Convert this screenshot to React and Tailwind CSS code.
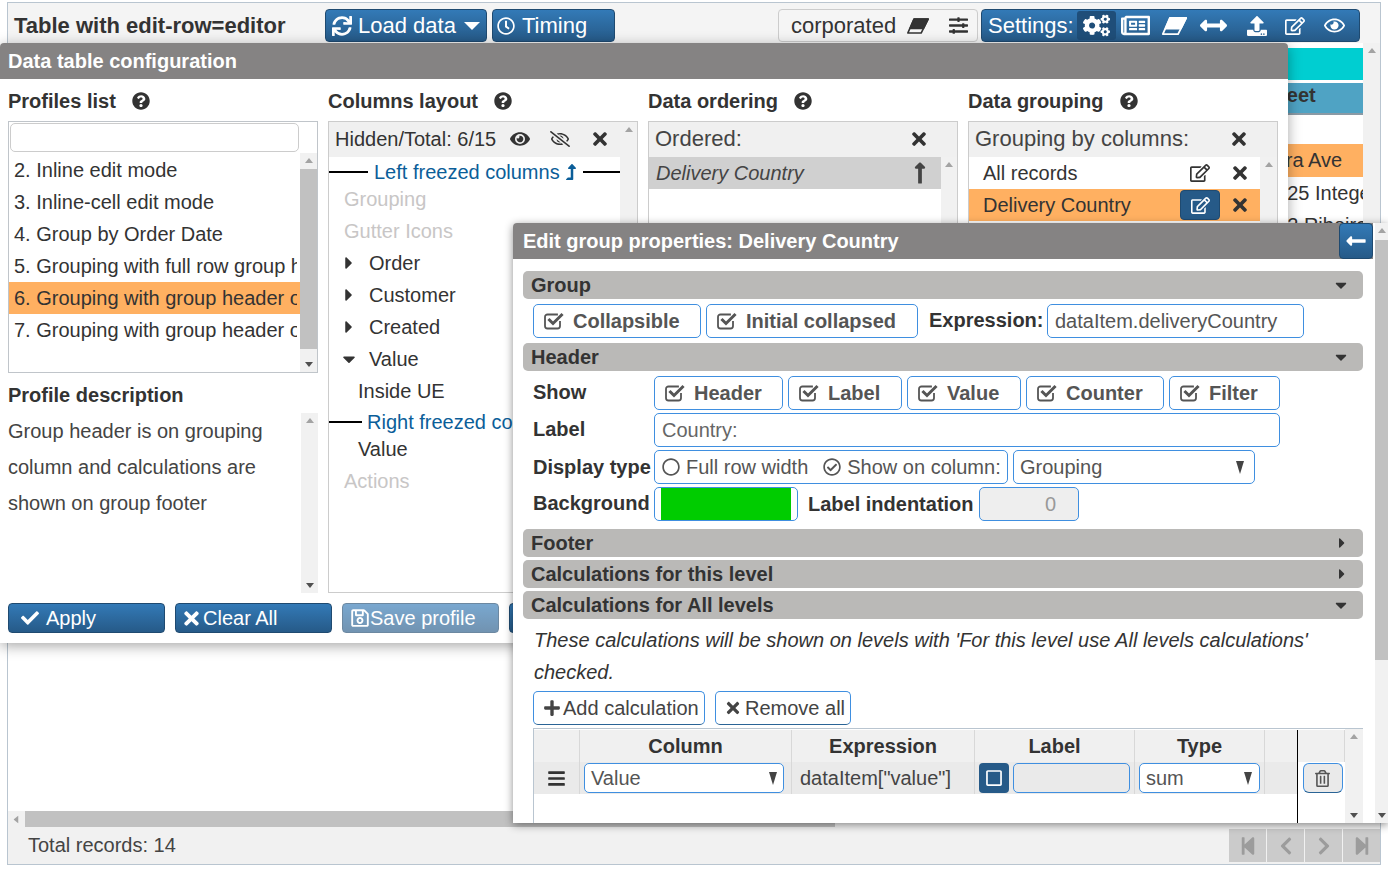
import {
  FaSync, FaCaretDown, FaCaretRight, FaRegClock, FaSlidersH, FaCogs, FaRegNewspaper,
  FaArrowsAltH, FaUpload, FaRegEdit, FaRegEye, FaEye, FaRegEyeSlash, FaTimes, FaQuestionCircle,
  FaCheck, FaRegSave, FaRegCircle, FaRegCheckCircle, FaPlus, FaBars, FaRegTrashAlt,
  FaLongArrowAltUp, FaLongArrowAltLeft, FaLevelUpAlt, FaStepBackward, FaStepForward, FaChevronLeft,
  FaChevronRight, FaRegSquare,
} from 'react-icons/fa';

const blueBtn = 'bg-linear-to-b from-[#337ab7] to-[#265a88] border border-[#1f4a70] rounded-[4px] text-white';

const Tri = ({ up, className = '' }) => (
  <svg viewBox="0 0 8 5" className={`w-2 h-[5px] ${className}`} fill="currentColor">
    <polygon points={up ? '4,0 8,5 0,5' : '0,0 8,0 4,5'} />
  </svg>
);

// the old font-awesome eraser: filled top, outlined strip along the bottom
const Eraser = ({ className = '' }) => (
  <svg viewBox="0 0 28 20" className={className} fill="currentColor" stroke="currentColor" strokeWidth="2" strokeLinejoin="round">
    <polygon points="9,1 27,1 18,19 1,19" fill="none" />
    <polygon points="9,1 27,1 21,13 4,13" />
  </svg>
);

// check-square-o, the tick sticks out of the open box
const CheckSquare = () => (
  <svg viewBox="0 0 20 18" className="w-5 h-[18px] shrink-0" fill="none" stroke="currentColor" strokeLinecap="square">
    <path d="M16 10v4a2.5 2.5 0 0 1-2.5 2.5h-10A2.5 2.5 0 0 1 1 14V5a2.5 2.5 0 0 1 2.5-2.5H13" strokeWidth="1.8" />
    <path d="M5.5 8l3.5 3.5 8.5-8.5" strokeWidth="3" />
  </svg>
);

// vertical scrollbar with arrows, thumb is optional
const VBar = ({ className = '', thumbTop = 0, thumbHeight = 0, width = 'w-4' }) => (
  <div className={`relative ${width} shrink-0 bg-[#f1f1f1] flex flex-col items-center justify-between py-[5px] text-[#a3a3a3] ${className}`}>
    <Tri up />
    {thumbHeight > 0 && (
      <div className="absolute left-0 right-0 bg-[#c1c1c1]" style={{ top: thumbTop, height: thumbHeight }} />
    )}
    <Tri className="text-[#505050]" />
  </div>
);

const Heading = ({ children }) => (
  <div className="h-[42px] flex items-center gap-4 font-bold text-[#333] pt-px">
    <span>{children}</span>
    <FaQuestionCircle className="text-[18px] text-[#333] mt-px" />
  </div>
);

const ProfileItem = ({ text, active }) => (
  <div className={`h-8 leading-8 pl-[5px] ${active ? 'bg-[#ffb061]' : ''}`}>
    <div className="w-[283px] whitespace-nowrap overflow-hidden">{text}</div>
  </div>
);

const ColumnRow = ({ text, dim, caret, indent, h = 'h-8' }) => (
  <div className={`${h} flex items-center whitespace-nowrap ${dim ? 'text-[#c8c6c6]' : ''}`}>
    {caret && (
      <span className="w-[40px] pl-[10px] shrink-0 text-[#333]">
        {caret === 'down' ? <FaCaretDown className="text-[20px]" /> : <FaCaretRight className="text-[20px]" />}
      </span>
    )}
    <span className={indent}>{text}</span>
  </div>
);

const Bar = ({ title, open }) => (
  <div className="mx-[10px] h-7 rounded-[5px] bg-[#bab9b7] flex items-center justify-between pl-2 pr-[13px] font-bold text-[#333]">
    <span>{title}</span>
    {open ? <FaCaretDown className="text-[18px]" /> : <FaCaretRight className="text-[16px]" />}
  </div>
);

const CheckBtn = ({ text, w }) => (
  <div className={`${w} h-[34px] border border-[#3f8fe0] rounded-[5px] bg-white flex items-center pl-[10px] gap-[9px] font-bold text-[#555] whitespace-nowrap`}>
    <CheckSquare />
    <span>{text}</span>
  </div>
);

const Field = ({ className = '', children }) => (
  <div className={`h-[34px] border border-[#3f8fe0] rounded-[5px] flex items-center pl-[7px] text-[#555] whitespace-nowrap ${className}`}>{children}</div>
);

const Select = ({ text, className = '', h = 'h-[34px]', pr = 'pr-[7px]' }) => (
  <div className={`${h} ${pr} border border-[#3f8fe0] rounded-[5px] bg-white flex items-center justify-between pl-[6px] text-[#555] ${className}`}>
    <span>{text}</span>
    <svg viewBox="0 0 8 13" className="w-2 h-[13px]" fill="#444"><polygon points="0,0 8,0 4,13" /></svg>
  </div>
);

const RowLabel = ({ children, className = '' }) => (
  <div className={`w-[121px] shrink-0 font-bold text-[#333] pl-[20px] whitespace-nowrap box-content ${className}`}>{children}</div>
);

const HeadCell = ({ w, children }) => (
  <div className={`${w} shrink-0 h-full border-r border-[#d8d8d8] flex items-center justify-center font-bold text-[#333]`}>{children}</div>
);

const BodyCell = ({ w, className = '', children }) => (
  <div className={`${w} shrink-0 h-full border-r border-[#d8d8d8] flex items-center ${className}`}>{children}</div>
);

const Pager = ({ children }) => (
  <div className="w-[37px] h-[33px] bg-[#cbcbcb] flex items-center justify-center text-[#9c9c9c] text-[20px]">{children}</div>
);

const Slot = ({ w, children }) => (
  <span className={`${w} shrink-0 flex items-center justify-center`}>{children}</span>
);

export default function App() {
  return (
    <div className="relative w-[1388px] h-[873px] overflow-hidden bg-white text-[20px] text-[#333] font-['Liberation_Sans',Arial,sans-serif]">
      {/* Page behind the dialogs */}
      <div className="mx-[7px] mt-[2px] h-[863px] border border-[#b9c5d0] flex flex-col">
        <div className="h-[40px] shrink-0 bg-[#f4f4f4] flex items-center pl-[6px] pr-[20px] pt-[5px]">
          <div className="w-[311px] font-bold text-[22px] whitespace-nowrap">Table with edit-row=editor</div>
          <div className={`${blueBtn} w-[162px] h-[33px] flex items-center pl-[6px] gap-[6px] text-[22px] whitespace-nowrap`}>
            <FaSync className="text-[20px]" /><span>Load data</span>
            <svg viewBox="0 0 16 8" className="w-4 h-2 ml-[2px]" fill="currentColor"><polygon points="0,0 16,0 8,8" /></svg>
          </div>
          <div className={`${blueBtn} ml-[5px] w-[123px] h-[33px] flex items-center pl-[4px] gap-[7px] text-[22px]`}>
            <FaRegClock className="text-[18px]" /><span>Timing</span>
          </div>
          <div className="ml-auto w-[200px] h-[33px] border border-[#ccc] rounded-[4px] flex items-center pl-3 text-[22px] bg-[#f5f5f5]">
            <span>corporated</span>
            <Eraser className="ml-[11px] w-[22px] h-4" />
            <FaSlidersH className="ml-[20px] text-[19px]" />
          </div>
          <div className={`${blueBtn} ml-[3px] w-[379px] h-[33px] flex items-center pl-[6px] text-[22px]`}>
            <span>Settings:</span>
            <span className="ml-[3px] w-[39px] h-[29px] shrink-0 rounded-[3px] bg-[#1f4e79] flex items-center justify-center"><FaCogs className="text-[27px]" /></span>
            <Slot w="w-10"><FaRegNewspaper className="text-[29px]" /></Slot>
            <Slot w="w-[38px]"><Eraser className="w-[27px] h-[18px]" /></Slot>
            <Slot w="w-10"><FaArrowsAltH className="text-[27px]" /></Slot>
            <Slot w="w-[46px]"><FaUpload className="text-[20px]" /></Slot>
            <Slot w="w-[30px]"><FaRegEdit className="text-[20px]" /></Slot>
            <Slot w="w-[50px]"><FaRegEye className="text-[21px]" /></Slot>
          </div>
        </div>

        {/* Table, mostly hidden by the configuration dialog */}
        <div className="flex-1 bg-white flex justify-end min-h-0">
          <div className="w-[75px] pt-[5px] text-[20px] overflow-hidden">
            <div className="h-8 bg-[#00ced1]" />
            <div className="h-8 mt-[3px] bg-[#4fa3c4] border-b-2 border-[#8a9aa5] font-bold whitespace-nowrap leading-[24px]"><span className="-ml-[29px] inline-block">Street</span></div>
            <div className="h-[29px]" />
            <div className="h-[33px] leading-[33px] bg-[#ffb061] whitespace-nowrap"><span className="-ml-[30px] inline-block">Ibara Ave</span></div>
            <div className="h-8 leading-8 whitespace-nowrap"><span className="-ml-[23px] inline-block">1225 Integer</span></div>
            <div className="h-8 leading-8 whitespace-nowrap"><span className="-ml-[23px] inline-block">132 Ribeira</span></div>
          </div>
          <VBar className="w-[17px]" width="w-[17px]" />
        </div>

        <div className="h-4 shrink-0 bg-[#f1f1f1] flex items-center relative">
          <Tri up className="-rotate-90 ml-1 text-[#a3a3a3]" />
          <div className="ml-[5px] w-[810px] h-full bg-[#c1c1c1]" />
        </div>
        <div className="h-[37px] shrink-0 bg-[#f1f1f1] flex items-center pl-[20px] pr-0">
          <span className="text-[#444] pb-[2px]">Total records: 14</span>
          <div className="ml-auto flex gap-px">
            <Pager><FaStepBackward /></Pager>
            <Pager><FaChevronLeft /></Pager>
            <Pager><FaChevronRight /></Pager>
            <Pager><FaStepForward /></Pager>
          </div>
        </div>
      </div>

      {/* Data table configuration dialog */}
      <div className="absolute left-0 top-[43px] w-[1288px] h-[600px] bg-white rounded-t-[4px] shadow-[0_3px_14px_rgba(0,0,0,0.35)] flex flex-col">
        <div className="h-9 shrink-0 bg-[#858383] rounded-t-[4px] flex items-center pl-2 font-bold text-white">Data table configuration</div>
        <div className="flex gap-[10px] px-2 flex-1 min-h-0">
          {/* Profiles */}
          <div className="w-[310px] shrink-0 flex flex-col">
            <Heading>Profiles list</Heading>
            <div className="h-[252px] border border-[#c0c5ca] flex flex-col">
              <div className="h-[31px] px-px pt-px shrink-0">
                <div className="h-[29px] w-[289px] border border-[#ccc] rounded-[5px]" />
              </div>
              <div className="flex flex-1 min-h-0">
                <div className="flex-1 min-w-0 pt-px">
                  <ProfileItem text="2. Inline edit mode" />
                  <ProfileItem text="3. Inline-cell edit mode" />
                  <ProfileItem text="4. Group by Order Date" />
                  <ProfileItem text="5. Grouping with full row group header" />
                  <ProfileItem text="6. Grouping with group header on column" active />
                  <ProfileItem text="7. Grouping with group header on column" />
                </div>
                <VBar width="w-[17px]" thumbTop={16} thumbHeight={180} />
              </div>
            </div>
            <div className="h-[40px] flex items-center font-bold pt-[4px] shrink-0">Profile description</div>
            <div className="h-[180px] flex">
              <div className="flex-1 leading-9 text-[#444]">
                Group header is on grouping<br />column and calculations are<br />shown on group footer
              </div>
              <VBar width="w-[17px]" />
            </div>
          </div>

          {/* Columns layout */}
          <div className="w-[310px] shrink-0 flex flex-col">
            <Heading>Columns layout</Heading>
            <div className="h-[472px] border border-[#ccc] flex">
              <div className="flex-1 min-w-0 overflow-hidden">
                <div className="h-[35px] pb-[2px] bg-[#f0f0f0] flex items-center pl-[6px] whitespace-nowrap">
                  <span>Hidden/Total: 6/15</span>
                  <FaEye className="ml-[14px] text-[20px]" />
                  <FaRegEyeSlash className="ml-[20px] text-[20px]" />
                  <FaTimes className="ml-[20px] text-[20px]" />
                </div>
                <div className="h-[26px] pt-[3px] flex items-center text-[#0b5e99] whitespace-nowrap">
                  <div className="w-[39px] h-[2px] bg-black" />
                  <span className="ml-[6px]">Left freezed columns</span>
                  <FaLevelUpAlt className="ml-[3px] text-[16px]" />
                  <div className="ml-[4px] flex-1 h-[2px] bg-black" />
                </div>
                <ColumnRow text="Grouping" dim indent="pl-[15px]" />
                <ColumnRow text="Gutter Icons" dim indent="pl-[15px]" />
                <ColumnRow text="Order" caret="right" />
                <ColumnRow text="Customer" caret="right" />
                <ColumnRow text="Created" caret="right" />
                <ColumnRow text="Value" caret="down" />
                <ColumnRow text="Inside UE" indent="pl-[29px]" />
                <div className="h-[30px] flex items-center text-[#0b5e99] whitespace-nowrap">
                  <div className="w-[33px] h-[2px] bg-black shrink-0" />
                  <span className="ml-[5px]">Right freezed columns</span>
                </div>
                <ColumnRow text="Value" indent="pl-[29px]" h="h-[24px]" />
                <ColumnRow text="Actions" dim indent="pl-[15px]" h="h-[39px]" />
              </div>
              <VBar width="w-[17px]" />
            </div>
          </div>

          {/* Data ordering */}
          <div className="w-[310px] shrink-0 flex flex-col">
            <Heading>Data ordering</Heading>
            <div className="h-[472px] border border-[#ccc] flex flex-col">
              <div className="h-[35px] pb-[2px] bg-[#f0f0f0] flex items-center justify-between pl-[6px] pr-[28px] text-[22px] text-[#444]">
                <span>Ordered:</span>
                <FaTimes className="text-[20px] text-[#333]" />
              </div>
              <div className="flex flex-1">
                <div className="flex-1">
                  <div className="h-8 bg-[#d0d0d0] flex items-center justify-between pl-[7px] pr-[9px] italic text-[#444]">
                    <span>Delivery Country</span>
                    <FaLongArrowAltUp className="text-[24px] not-italic" />
                  </div>
                </div>
                <VBar />
              </div>
            </div>
          </div>

          {/* Data grouping */}
          <div className="w-[310px] shrink-0 flex flex-col">
            <Heading>Data grouping</Heading>
            <div className="h-[472px] border border-[#ccc] flex flex-col">
              <div className="h-[35px] pb-[2px] bg-[#f0f0f0] flex items-center justify-between pl-[6px] pr-[28px] text-[22px] text-[#444]">
                <span>Grouping by columns:</span>
                <FaTimes className="text-[20px] text-[#333]" />
              </div>
              <div className="flex flex-1">
                <div className="flex-1">
                  <div className="h-8 flex items-center pl-[14px]">
                    <span>All records</span>
                    <FaRegEdit className="ml-auto mr-[10px] text-[20px]" />
                    <span className="w-10 flex justify-center"><FaTimes className="text-[20px]" /></span>
                  </div>
                  <div className="h-8 bg-[#ffb061] flex items-center pl-[14px]">
                    <span>Delivery Country</span>
                    <span className="ml-auto w-10 h-[30px] rounded-[4px] bg-[#265a88] border border-[#1f4a70] flex items-center justify-center text-white"><FaRegEdit className="text-[19px]" /></span>
                    <span className="w-10 flex justify-center"><FaTimes className="text-[20px]" /></span>
                  </div>
                </div>
                <VBar width="w-[17px]" />
              </div>
            </div>
          </div>
        </div>
        <div className="h-[40px] shrink-0 flex gap-[10px] px-2">
          <div className={`${blueBtn} w-[157px] h-[30px] flex items-center`}>
            <FaCheck className="text-[18px] ml-[12px] mr-[7px]" /><span>Apply</span>
          </div>
          <div className={`${blueBtn} w-[157px] h-[30px] flex items-center`}>
            <FaTimes className="text-[21px] ml-[5px] mr-px" /><span>Clear All</span>
          </div>
          <div className={`${blueBtn} opacity-65 w-[157px] h-[30px] flex items-center`}>
            <FaRegSave className="text-[20px] ml-[7px]" /><span>Save profile</span>
          </div>
          <div className={`${blueBtn} w-[157px] h-[30px]`} />
        </div>
      </div>

      {/* Edit group properties dialog */}
      <div className="absolute left-[513px] top-[223px] w-[875px] h-[600px] bg-white rounded-tl-[4px] shadow-[0_2px_8px_rgba(0,0,0,0.45)] flex overflow-hidden">
        <div className="w-[860px] shrink-0 flex flex-col">
          <div className="h-9 shrink-0 bg-[#858383] flex items-center justify-between pl-[10px] font-bold text-white">
            <span>Edit group properties: Delivery Country</span>
            <span className={`${blueBtn} w-[34px] h-[36px] flex items-center justify-center`}><FaLongArrowAltLeft className="text-[22px]" /></span>
          </div>

          <div className="mt-3"><Bar title="Group" open /></div>
          <div className="h-[44px] shrink-0 pl-[20px] pt-[5px] flex gap-[5px]">
            <CheckBtn text="Collapsible" w="w-[168px]" />
            <CheckBtn text="Initial collapsed" w="w-[212px]" />
            <div className="ml-[6px] font-bold leading-8 w-[113px] whitespace-nowrap">Expression:</div>
            <Field className="w-[257px]">dataItem.deliveryCountry</Field>
          </div>
          <Bar title="Header" open />
          <div className="mt-[5px] flex flex-col gap-[3px]">
            <div className="flex items-center h-[34px]">
              <RowLabel className="pb-[2px]">Show</RowLabel>
              <div className="flex gap-[5px]">
                <CheckBtn text="Header" w="w-[129px]" />
                <CheckBtn text="Label" w="w-[114px]" />
                <CheckBtn text="Value" w="w-[114px]" />
                <CheckBtn text="Counter" w="w-[138px]" />
                <CheckBtn text="Filter" w="w-[111px]" />
              </div>
            </div>
            <div className="flex items-center h-[34px]">
              <RowLabel className="pb-[2px]">Label</RowLabel>
              <Field className="w-[626px] text-[#666]">Country:</Field>
            </div>
            <div className="flex items-center h-[34px]">
              <RowLabel>Display type</RowLabel>
              <Field className="w-[354px] gap-[6px]">
                <FaRegCircle className="text-[18px]" />
                <span>Full row width</span>
                <FaRegCheckCircle className="ml-[9px] text-[18px]" />
                <span>Show on column:</span>
              </Field>
              <Select text="Grouping" pr="pr-[10px]" className="ml-[5px] w-[242px]" />
            </div>
            <div className="flex items-center h-[34px]">
              <RowLabel className="pb-[2px]">Background</RowLabel>
              <div className="w-[144px] h-[34px] border border-[#3f8fe0] rounded-[5px] px-[6px] bg-white">
                <div className="h-full bg-[#00cc00]" />
              </div>
              <div className="ml-[10px] w-[171px] font-bold whitespace-nowrap">Label indentation</div>
              <div className="w-[100px] h-[34px] border border-[#3f8fe0] rounded-[5px] bg-[#eee] flex items-center justify-end pr-[22px] text-[#999]">0</div>
            </div>
          </div>
          <div className="mt-2"><Bar title="Footer" /></div>
          <div className="mt-[3px]"><Bar title="Calculations for this level" /></div>
          <div className="mt-[3px]"><Bar title="Calculations for All levels" open /></div>
          <div className="mt-[5px] pl-[21px] pr-[30px] italic leading-8 text-[#333]">
            These calculations will be shown on levels with 'For this level use All levels calculations' checked.
          </div>
          <div className="mt-[3px] pl-[20px] flex gap-[10px] text-[#444]">
            <div className="w-[172px] h-[34px] border border-[#3f8fe0] border-b-[#2a6496] rounded-[5px] flex items-center pl-[9px] gap-[2px]"><FaPlus className="text-[18px]" />Add calculation</div>
            <div className="w-[136px] h-[34px] border border-[#3f8fe0] border-b-[#2a6496] rounded-[5px] flex items-center pl-[8px] gap-[3px]"><FaTimes className="text-[18px]" />Remove all</div>
          </div>
          {/* Calculations table */}
          <div className="mt-[3px] ml-[20px] mr-[10px] flex-1 border-t border-l border-[#b9c5d0] flex min-h-0">
            <div className="flex-1 flex flex-col pt-px">
              <div className="h-8 shrink-0 bg-[#f0f0f0] flex">
                <HeadCell w="w-[46px]" />
                <HeadCell w="w-[212px]">Column</HeadCell>
                <HeadCell w="w-[183px]">Expression</HeadCell>
                <HeadCell w="w-[160px]">Label</HeadCell>
                <HeadCell w="w-[130px]">Type</HeadCell>
                <div className="w-[32px] shrink-0" />
                <div className="w-px shrink-0 bg-black" />
                <div className="flex-1 border-r border-[#d8d8d8]" />
              </div>
              <div className="h-8 shrink-0 bg-[#eaeaea] flex">
                <BodyCell w="w-[46px]" className="justify-center"><FaBars className="text-[19px]" /></BodyCell>
                <BodyCell w="w-[212px]" className="px-[4px]"><Select text="Value" h="h-[30px]" pr="pr-[6px]" className="w-[200px]" /></BodyCell>
                <BodyCell w="w-[183px]" className="pl-[8px] text-[#444] whitespace-nowrap">dataItem["value"]</BodyCell>
                <BodyCell w="w-[160px]" className="pl-[4px] gap-[4px]">
                  <span className="w-[30px] h-[30px] rounded-[4px] bg-[#265a88] flex items-center justify-center text-white"><FaRegSquare className="text-[18px]" /></span>
                  <span className="w-[117px] h-[30px] border border-[#3f8fe0] rounded-[5px] bg-[#eaeaea]" />
                </BodyCell>
                <BodyCell w="w-[130px]" className="px-[4px]"><Select text="sum" h="h-[30px]" className="w-full" /></BodyCell>
                <div className="w-[32px] shrink-0" />
                <div className="w-px shrink-0 bg-black" />
                <div className="flex-1 bg-white flex items-center justify-center pl-[2px]">
                  <span className="w-[40px] h-[30px] rounded-[6px] border border-[#3f8fe0] border-b-[#2a6496] bg-[#eaeaea] flex items-center justify-center text-[#555]"><FaRegTrashAlt className="text-[17px]" /></span>
                </div>
              </div>
              <div className="flex-1 flex min-h-0">
                <div className="w-[763px]" />
                <div className="w-px bg-black" />
              </div>
            </div>
            <VBar className="w-[18px]" width="w-[18px]" />
          </div>
        </div>
        <div className="w-[2px] shrink-0" />
        <VBar width="w-[13px]" thumbTop={17} thumbHeight={420} />
      </div>
    </div>
  );
}
